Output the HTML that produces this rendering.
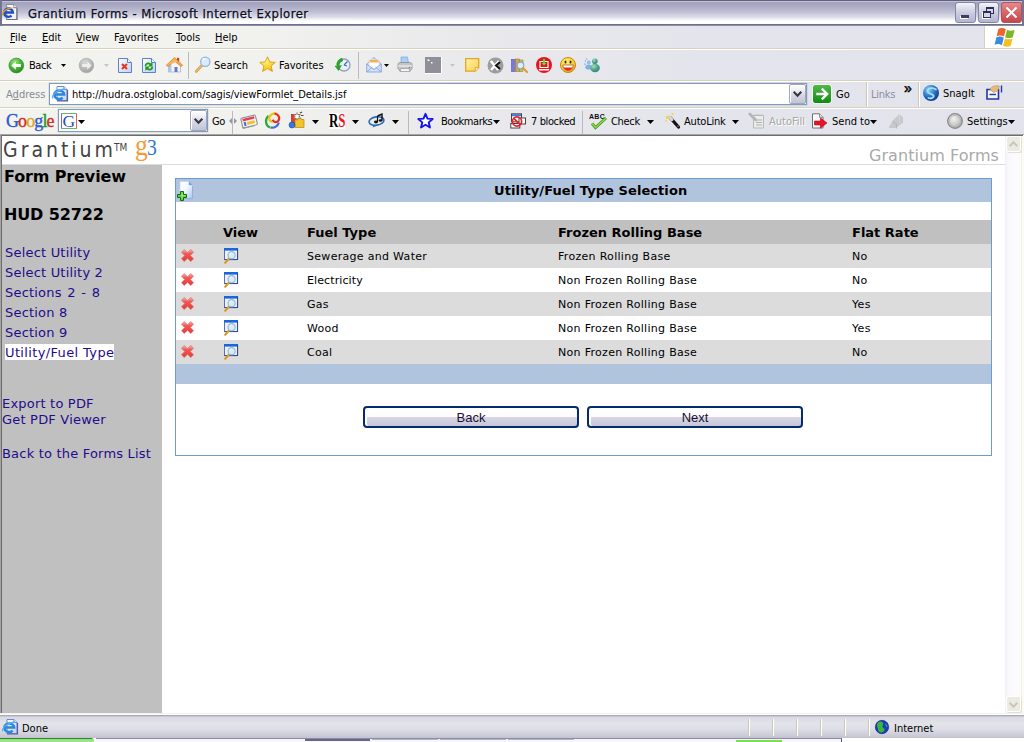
<!DOCTYPE html>
<html><head><meta charset="utf-8"><title>Grantium Forms - Microsoft Internet Explorer</title>
<style>
*{box-sizing:border-box;margin:0;padding:0}
html,body{width:1024px;height:742px;overflow:hidden;background:#fff}
body{position:relative;font-family:"DejaVu Sans Condensed","Liberation Sans",sans-serif;font-size:11px;color:#000}
.abs{position:absolute}
svg{position:absolute;overflow:visible}
.t{position:absolute;white-space:nowrap;line-height:14px;height:14px}
.d{color:#8e8ea4}
#title{left:0;top:0;width:1024px;height:26px;background:linear-gradient(#5f5f7d 0,#5f5f7d 1px,#c4c4d8 1px,#c4c4d8 2px,#a2a2be 2px,#a9a9c3 6px,#c0c0d4 12px,#dcdce8 17px,#f6f6fa 20px,#fff 21.500px,#fff 24px,#6f6f8c 24px,#6f6f8c 25px,#8d8da6 25px,#8d8da6 26px)}
#ttext{left:28px;top:6px;-webkit-text-stroke:.25px #0c0c1e;font:13px/16px "DejaVu Sans Condensed","Liberation Sans",sans-serif;height:16px;letter-spacing:.43px;color:#0c0c1e;text-shadow:1px 1px 0 rgba(255,255,255,.55)}
.cb{position:absolute;top:2px;width:21px;height:21px;border:1px solid #8486a6;border-radius:3px;background:linear-gradient(#f4f4fa,#c9cade 55%,#b4b6d0)}
#rebar{left:0;top:26px;width:1024px;height:108px;background:linear-gradient(90deg,#f3f3ef 0,#f1f1ee 260px,#e9e9ec 480px,#e4e5ec 700px,#e2e3eb 1024px)}
.hsep{position:absolute;left:0;width:1024px;height:2px;background:linear-gradient(#d8d2bd 0,#d8d2bd 1px,#fff 1px,#fff 2px)}
.vsep{position:absolute;width:2px;background:linear-gradient(90deg,#cdc8b4 0,#cdc8b4 1px,#fff 1px,#fff 2px)}
.ts{position:absolute;width:1px;background:#b9b9c4}
.combo{position:absolute;background:#fff;border:1px solid #7f9db9;box-shadow:0 0 0 .5px rgba(127,157,185,.35)}
.dd{position:absolute;width:17px;border:1px solid #a3a5bd;border-radius:2px;background:linear-gradient(#fff 0,#f0f0f6 25%,#d4d5e3 60%,#c2c3d7 100%);box-shadow:1px 1px 0 #fff inset}
.ar{position:absolute;width:0;height:0;border-left:3.5px solid transparent;border-right:3.5px solid transparent;border-top:4px solid #000}
.ar5{position:absolute;width:0;height:0;border-left:3px solid transparent;border-right:3px solid transparent;border-top:3px solid #000}
#page{left:0;top:134px;width:1024px;height:582px;background:#fff}
#side{left:2px;top:165px;width:160px;height:548px;background:#c0c0c0}
#status{left:0;top:713px;width:1024px;height:25px;background:linear-gradient(#f4f2e6 0,#f4f2e6 1px,#fff 1px,#fff 2px,#9a9aac 2px,#b8b8c6 3px,#d9d9e2 4px,#e2e2e9 10px,#e0e0e8 15px,#d0d0dc 21px,#c2c2d0 25px)}
#task{left:0;top:738px;width:1024px;height:4px;background:#fff}
.v{font-family:"DejaVu Sans","Liberation Sans",sans-serif}
/* page content */
#logo{left:3px;top:136px;font:21px/28px "DejaVu Sans Condensed","Liberation Sans",sans-serif;color:#444;letter-spacing:3px;height:28px}
#gf{left:869px;top:146px;font:16px/20px "DejaVu Sans","Liberation Sans",sans-serif;color:#a9a9a9;height:20px;letter-spacing:.06px}
#hline{left:2px;top:164px;width:1003px;height:1px;background:#dcdcdf}
.h{font:bold 16px/20px "DejaVu Sans","Liberation Sans",sans-serif;height:20px;left:4px;color:#000;letter-spacing:-.13px}
.sl{font:13px/16px "DejaVu Sans","Liberation Sans",sans-serif;height:16px;color:#1f0c8c;letter-spacing:.2px}
#panel{left:175px;top:178px;width:817px;height:278px;border:1px solid #6f9ad0;background:#fff}
#ph{left:176px;top:179px;width:815px;height:23px;background:#b0c4de}
#pt{left:494px;top:183px;font:bold 13px/16px "DejaVu Sans","Liberation Sans",sans-serif;height:16px;letter-spacing:.07px}
#th{left:176px;top:220px;width:815px;height:24px;background:#c0c0c0}
.r{position:absolute;left:176px;width:815px;height:24px}
.g{background:#dcdcdc}
.thc{top:225px;font:bold 13px/16px "DejaVu Sans","Liberation Sans",sans-serif;height:16px}
.c{font:11px/14px "DejaVu Sans","Liberation Sans",sans-serif;height:14px;letter-spacing:.3px;color:#000}
#pf{left:176px;top:364px;width:815px;height:20px;background:#b0c4de}
.btn{position:absolute;top:406px;width:216px;height:22px;border:2px solid #042c6c;border-radius:4px;background:linear-gradient(#fff 0,#fcfcfd 50%,#d8d8e8 50%,#c6c6d9 100%);box-shadow:inset 2px 0 0 #fff;font:13px/20px "Liberation Sans",sans-serif;text-align:center;color:#1a1030}
</style></head><body>
<svg width="0" height="0" style="left:0;top:0"><defs>
<radialGradient id="gG" cx=".4" cy=".3" r=".8"><stop offset="0" stop-color="#9be67a"/><stop offset=".5" stop-color="#46b633"/><stop offset="1" stop-color="#1f7d1c"/></radialGradient>
<radialGradient id="gY" cx=".4" cy=".3" r=".8"><stop offset="0" stop-color="#d8d8d8"/><stop offset=".6" stop-color="#b4b4b4"/><stop offset="1" stop-color="#979797"/></radialGradient>
<linearGradient id="gP" x1="0" y1="0" x2="1" y2="1"><stop offset="0" stop-color="#fff"/><stop offset="1" stop-color="#bcd0f4"/></linearGradient>
<radialGradient id="gB" cx=".35" cy=".3" r=".8"><stop offset="0" stop-color="#8fd0f4"/><stop offset=".5" stop-color="#2a78c8"/><stop offset="1" stop-color="#0a2f86"/></radialGradient>
<radialGradient id="gS" cx=".4" cy=".35" r=".7"><stop offset="0" stop-color="#f2f2f2"/><stop offset=".7" stop-color="#c4c4c4"/><stop offset="1" stop-color="#9a9a9a"/></radialGradient>
<radialGradient id="gF" cx=".4" cy=".3" r=".8"><stop offset="0" stop-color="#fff27a"/><stop offset=".7" stop-color="#f7c81e"/><stop offset="1" stop-color="#d58a0a"/></radialGradient>
<linearGradient id="gN" x1="0" y1="0" x2="1" y2="1"><stop offset="0" stop-color="#fff3a8"/><stop offset="1" stop-color="#f7cf52"/></linearGradient>
<linearGradient id="gGo" x1="0" y1="0" x2="0" y2="1"><stop offset="0" stop-color="#52b848"/><stop offset="1" stop-color="#118a14"/></linearGradient>
<radialGradient id="gM" cx=".35" cy=".3" r=".9"><stop offset="0" stop-color="#a8e0b0"/><stop offset=".5" stop-color="#4a9e88"/><stop offset="1" stop-color="#2a6aa8"/></radialGradient>
<linearGradient id="gD" x1="0" y1="0" x2="1" y2="1"><stop offset="0" stop-color="#fff"/><stop offset=".45" stop-color="#f4f8ff"/><stop offset="1" stop-color="#a4c6f8"/></linearGradient>
<linearGradient id="gX" x1="0" y1="0" x2="0" y2="1"><stop offset="0" stop-color="#f8b4b0"/><stop offset=".35" stop-color="#ee5a56"/><stop offset="1" stop-color="#e23a36"/></linearGradient>
</defs></svg>
<div id="title" class="abs"></div>
<div class="abs" style="left:0;top:0;width:2px;height:26px;background:#74748f"></div>
<div class="abs" style="left:1022px;top:0;width:2px;height:26px;background:#74748f"></div>
<div id="ttext" class="t">Grantium Forms - Microsoft Internet Explorer</div>
<div class="cb" style="left:955px"><div class="abs" style="left:5px;top:12px;width:8px;height:3px;background:#3c3e66;box-shadow:-1px 1px 0 #fff"></div></div>
<div class="cb" style="left:978px"><div class="abs" style="left:7px;top:4px;width:8px;height:7px;border:1px solid #2c2e56;border-top-width:2px"></div><div class="abs" style="left:4px;top:8px;width:8px;height:7px;border:1px solid #2c2e56;border-top-width:2px;background:#d4d5e6;box-shadow:-1px 1px 0 #fff"></div></div>
<div class="cb" style="left:1001px;border-color:#b4525e;background:linear-gradient(#e48a8c,#d46668 50%,#c4484e)"><svg style="left:3px;top:3px" width="13" height="13" viewBox="0 0 13 13"><path d="M1.500 1.500l10 10M11.500 1.500l-10 10" stroke="#fff" stroke-width="2"/></svg></div>
<div id="rebar" class="abs"></div>
<div class="abs" style="left:985px;top:26px;width:39px;height:22px;background:#fff"></div>
<div class="abs" style="left:984px;top:26px;width:1px;height:22px;background:#d8d2bd"></div>
<div class="hsep" style="top:48px"></div>
<div class="hsep" style="top:80px"></div>
<div class="hsep" style="top:107px"></div>
<div class="vsep" style="left:866px;top:82px;height:25px"></div>
<div class="vsep" style="left:918px;top:82px;height:25px"></div>
<div class="t" style="left:10px;top:31px"><u>F</u>ile</div>
<div class="t" style="left:42px;top:31px"><u>E</u>dit</div>
<div class="t" style="left:76px;top:31px"><u>V</u>iew</div>
<div class="t" style="left:114px;top:31px">F<u>a</u>vorites</div>
<div class="t" style="left:176px;top:31px"><u>T</u>ools</div>
<div class="t" style="left:215px;top:31px"><u>H</u>elp</div>
<div class="t" style="left:29px;top:59px;letter-spacing:-.45px">Back</div>
<svg style="left:61px;top:64px" width="5" height="3" viewBox="0 0 5 3"><path d="M0 0h5l-2.500 3z" fill="#000"/></svg>
<svg style="left:104px;top:64px" width="5" height="3" viewBox="0 0 5 3"><path d="M0 0h5l-2.500 3z" fill="#c4c4cc"/></svg>
<div class="ts" style="left:188px;top:52px;height:27px"></div>
<div class="t" style="left:214px;top:59px">Search</div>
<div class="t" style="left:279px;top:59px">Favorites</div>
<div class="ts" style="left:358px;top:52px;height:27px"></div>
<svg style="left:384px;top:64px" width="5" height="3" viewBox="0 0 5 3"><path d="M0 0h5l-2.500 3z" fill="#000"/></svg>
<svg style="left:450px;top:64px" width="5" height="3" viewBox="0 0 5 3"><path d="M0 0h5l-2.500 3z" fill="#c4c4cc"/></svg>
<div class="t d" style="left:6px;top:88px;color:#8a8a96">A<u>d</u>dress</div>
<div class="combo" style="left:49px;top:83px;width:758px;height:22px"></div>
<div class="t" style="left:72px;top:88px;letter-spacing:-.07px">http://hudra.ostglobal.com/sagis/viewFormlet_Details.jsf</div>
<div class="dd" style="left:789px;top:84px;height:20px"><svg style="left:3px;top:6px" width="9" height="6" viewBox="0 0 9 6"><path d="M.7 .7l3.800 4 3.800-4" fill="none" stroke="#36363e" stroke-width="2.100"/></svg></div>
<div class="t" style="left:836px;top:88px">Go</div>
<div class="t" style="left:871px;top:88px;color:#8c8ca6;letter-spacing:-.25px">Links</div>
<div class="t" style="left:904px;top:79px;font:14px/18px 'Liberation Sans',sans-serif;height:18px;-webkit-text-stroke:.5px;letter-spacing:-.3px">»</div>
<div class="t" style="left:943px;top:87px">SnagIt</div>
<div class="t" style="left:6px;top:109px;height:24px;font:18px/24px 'Liberation Serif',serif;letter-spacing:-.9px;-webkit-text-stroke:.35px"><span style="color:#2a5ad8">G</span><span style="color:#d82a20">o</span><span style="color:#d8a818">o</span><span style="color:#2a5ad8">g</span><span style="color:#1a9a2a">l</span><span style="color:#d82a20">e</span></div>
<div class="combo" style="left:58px;top:109px;width:150px;height:23px"></div>
<svg style="left:78px;top:120px" width="7" height="4" viewBox="0 0 7 4"><path d="M0 0h7l-3.500 4z" fill="#000"/></svg>
<div class="dd" style="left:190px;top:110px;height:21px"><svg style="left:3px;top:7px" width="9" height="6" viewBox="0 0 9 6"><path d="M.7 .7l3.800 4 3.800-4" fill="none" stroke="#36363e" stroke-width="2.100"/></svg></div>
<div class="t" style="left:212px;top:115px;letter-spacing:-.5px">Go</div>
<div class="ts" style="left:232px;top:111px;height:23px"></div>
<div class="abs" style="left:229px;top:118px;width:0;height:0;border-top:3.500px solid transparent;border-bottom:3.500px solid transparent;border-right:3.500px solid #96969e"></div>
<div class="abs" style="left:234px;top:118px;width:0;height:0;border-top:3.500px solid transparent;border-bottom:3.500px solid transparent;border-left:3.500px solid #96969e"></div>
<svg style="left:312px;top:120px" width="7" height="4" viewBox="0 0 7 4"><path d="M0 0h7l-3.500 4z" fill="#000"/></svg>
<div class="abs" style="left:329px;top:113px;width:16px;height:16px;background:#fff"></div>
<div class="t" style="left:329px;top:111px;height:20px;font:bold 19px/20px 'Liberation Serif',serif;transform:scaleX(.68);transform-origin:0 0">R<span style="color:#f0141e">S</span></div>
<svg style="left:352px;top:120px" width="7" height="4" viewBox="0 0 7 4"><path d="M0 0h7l-3.500 4z" fill="#000"/></svg>
<svg style="left:392px;top:120px" width="7" height="4" viewBox="0 0 7 4"><path d="M0 0h7l-3.500 4z" fill="#000"/></svg>
<div class="ts" style="left:408px;top:111px;height:23px"></div>
<div class="t" style="left:441px;top:115px;letter-spacing:-.45px">Bookmarks</div>
<svg style="left:493px;top:120px" width="7" height="4" viewBox="0 0 7 4"><path d="M0 0h7l-3.500 4z" fill="#000"/></svg>
<div class="t" style="left:531px;top:115px;letter-spacing:-.38px">7 blocked</div>
<div class="ts" style="left:582px;top:111px;height:23px"></div>
<div class="t" style="left:611px;top:115px;letter-spacing:-.32px">Check</div>
<svg style="left:647px;top:120px" width="7" height="4" viewBox="0 0 7 4"><path d="M0 0h7l-3.500 4z" fill="#000"/></svg>
<div class="t" style="left:684px;top:115px;letter-spacing:-.2px">AutoLink</div>
<svg style="left:732px;top:120px" width="7" height="4" viewBox="0 0 7 4"><path d="M0 0h7l-3.500 4z" fill="#000"/></svg>
<div class="t" style="left:769px;top:115px;color:#a8a89c;text-shadow:1px 1px 0 #fff">AutoFill</div>
<div class="t" style="left:832px;top:115px">Send to</div>
<svg style="left:870px;top:120px" width="7" height="4" viewBox="0 0 7 4"><path d="M0 0h7l-3.500 4z" fill="#000"/></svg>
<div class="t" style="left:967px;top:115px">Settings</div>
<svg style="left:1008px;top:120px" width="7" height="4" viewBox="0 0 7 4"><path d="M0 0h7l-3.500 4z" fill="#000"/></svg>

<div id="page" class="abs"></div>
<div class="abs" style="left:0;top:134px;width:1024px;height:1px;background:#a5a5a5"></div>
<div class="abs" style="left:1px;top:135px;width:1022px;height:1px;background:#6d6d6d"></div>
<div class="abs" style="left:0;top:134px;width:1px;height:580px;background:#a5a5a5"></div>
<div class="abs" style="left:1px;top:135px;width:1px;height:578px;background:#6d6d6d"></div>
<div id="side" class="abs"></div>
<div class="abs" style="left:1005px;top:136px;width:19px;height:577px;background:linear-gradient(90deg,#eeeef4 0,#f7f7fb 2px,#fbfbfe 8px,#fcfcff 16px,#f3f1e5 16px,#f3f1e5 17px,#fbfaf4 17px,#fbfaf4 19px)"></div>
<div class="abs" style="left:1006px;top:136px;width:15px;height:16px;border:1px solid #fff;border-radius:2px;background:#ecebe1;box-shadow:1px 1px 0 #e2e0d0"><svg style="left:2px;top:4px" width="9" height="6" viewBox="0 0 9 6"><path d="M.6 5.200l3.900-4 3.900 4" fill="none" stroke="#c9c7bb" stroke-width="2"/></svg></div>
<div class="abs" style="left:1006px;top:696px;width:15px;height:16px;border:1px solid #fff;border-radius:2px;background:#ecebe1;box-shadow:1px 1px 0 #e2e0d0"><svg style="left:2px;top:5px" width="9" height="6" viewBox="0 0 9 6"><path d="M.6 .800l3.900 4 3.900-4" fill="none" stroke="#c9c7bb" stroke-width="2"/></svg></div>
<!-- page content -->
<div id="logo" class="t">Grantium<span style="font-size:10px;letter-spacing:0;position:relative;top:-6.500px;margin-left:-2px">TM</span></div>
<div class="t" style="left:134.500px;top:129px;height:32px;font:29px/32px 'Liberation Serif',serif;color:#f59a38;transform:scaleX(.88);transform-origin:0 0">g</div>
<div class="t" style="left:146.500px;top:131px;height:32px;font:24px/32px 'Liberation Serif',serif;color:#2f76c8;transform:scaleX(.82);transform-origin:0 0">3</div>
<div id="gf" class="t">Grantium Forms</div>
<div id="hline" class="abs"></div>
<div class="t h" style="top:167px">Form Preview</div>
<div class="t h" style="top:205px">HUD 52722</div>
<div class="t sl" style="left:5px;top:245px">Select Utility</div>
<div class="t sl" style="left:5px;top:265px">Select Utility 2</div>
<div class="t sl" style="left:5px;top:285px;word-spacing:1.25px">Sections 2 - 8</div>
<div class="t sl" style="left:5px;top:305px">Section 8</div>
<div class="t sl" style="left:5px;top:325px">Section 9</div>
<div class="t sl" style="left:5px;top:344px;background:#fff;width:109px;line-height:18px;letter-spacing:.36px">Utility/Fuel Type</div>
<div class="t sl" style="left:2px;top:396px">Export to PDF</div>
<div class="t sl" style="left:2px;top:412px">Get PDF Viewer</div>
<div class="t sl" style="left:2px;top:446px">Back to the Forms List</div>
<div id="panel" class="abs"></div>
<div id="ph" class="abs"></div>
<div id="pt" class="t">Utility/Fuel Type Selection</div>
<div id="th" class="abs"></div>
<div class="t thc" style="left:223px">View</div>
<div class="t thc" style="left:307px">Fuel Type</div>
<div class="t thc" style="left:558px">Frozen Rolling Base</div>
<div class="t thc" style="left:852px">Flat Rate</div>
<div class="r g" style="top:244px"></div>
<div class="r g" style="top:292px"></div>
<div class="r g" style="top:340px"></div>
<div class="t c" style="left:307px;top:250px">Sewerage and Water</div>
<div class="t c" style="left:558px;top:250px">Frozen Rolling Base</div>
<div class="t c" style="left:852px;top:250px">No</div>
<div class="t c" style="left:307px;top:274px;letter-spacing:.1px">Electricity</div>
<div class="t c" style="left:558px;top:274px">Non Frozen Rolling Base</div>
<div class="t c" style="left:852px;top:274px">No</div>
<div class="t c" style="left:307px;top:298px">Gas</div>
<div class="t c" style="left:558px;top:298px">Non Frozen Rolling Base</div>
<div class="t c" style="left:852px;top:298px">Yes</div>
<div class="t c" style="left:307px;top:322px">Wood</div>
<div class="t c" style="left:558px;top:322px">Non Frozen Rolling Base</div>
<div class="t c" style="left:852px;top:322px">Yes</div>
<div class="t c" style="left:307px;top:346px">Coal</div>
<div class="t c" style="left:558px;top:346px">Non Frozen Rolling Base</div>
<div class="t c" style="left:852px;top:346px">No</div>
<div id="pf" class="abs"></div>
<div class="btn" style="left:363px">Back</div>
<div class="btn" style="left:587px">Next</div>

<div id="status" class="abs"></div>
<div class="t" style="left:22px;top:722px">Done</div>
<div class="vsep" style="left:748px;top:719px;height:17px"></div><div class="vsep" style="left:772px;top:719px;height:17px"></div><div class="vsep" style="left:796px;top:719px;height:17px"></div><div class="vsep" style="left:820px;top:719px;height:17px"></div><div class="vsep" style="left:844px;top:719px;height:17px"></div><div class="vsep" style="left:868px;top:719px;height:17px"></div>
<div class="t" style="left:894px;top:722px">Internet</div>
<div id="task" class="abs"></div>
<div class="abs" style="left:0;top:738px;width:94px;height:4px;background:linear-gradient(#2a8a2a 0,#2a8a2a 1px,#8edc7c 1px,#a4e694 4px);border-radius:0 3px 0 0"></div>
<div class="abs" style="left:96px;top:738px;width:746px;height:4px;border-top:1px solid #8c8ca8;border-right:1px solid #55557a;background:#f6f6fa"></div>
<div class="abs" style="left:305px;top:739px;width:65px;height:2px;background:#66668a"></div>
<div class="abs" style="left:372px;top:739px;width:66px;height:1px;background:#b4b4c8"></div>
<div class="abs" style="left:440px;top:739px;width:66px;height:1px;background:#b4b4c8"></div>
<div class="abs" style="left:508px;top:739px;width:66px;height:1px;background:#b4b4c8"></div>
<div class="abs" style="left:736px;top:740px;width:46px;height:2px;background:#7ae04a"></div>
<svg style="left:2px;top:4px" width="16.5" height="16.5" viewBox="0 0 16 16"><path d="M4.500 .500h7l3 3v11.500h-10z" fill="#f4f4ec" stroke="#8c8c9c"/><path d="M11.500 .500v3h3" fill="#fff" stroke="#8c8c9c"/><path d="M14.500 4v11h-10" fill="none" stroke="#6a6a8a" stroke-width="1"/><path d="M9.300 11.300a4.300 4 0 1 1 1.300-3.100H2.600" fill="none" stroke="#1c4fc8" stroke-width="2.300"/><path d="M.600 11c-.5-3.500 4-7.500 9.500-7" fill="none" stroke="#e8a020" stroke-width="1.300"/></svg>
<svg style="left:8px;top:57px" width="17" height="17" viewBox="0 0 17 17"><circle cx="8.3" cy="8.5" r="7.4" fill="url(#gG)" stroke="#2f8a2a" stroke-width=".6"/><path d="M3.4 8.5l4.4-4.3v2.7h5v3.2h-5v2.7z" fill="#fff"/></svg>
<svg style="left:78px;top:57px" width="17" height="17" viewBox="0 0 17 17"><circle cx="8.4" cy="8.5" r="7.3" fill="url(#gY)" stroke="#a8a8a8" stroke-width=".6"/><path d="M13.6 8.5l-4.4-4.3v2.7h-5v3.2h5v2.7z" fill="#eee"/></svg>
<svg style="left:118px;top:58px" width="14" height="15" viewBox="0 0 14 15"><path d="M.5 .5h9l4 4v10h-13z" fill="url(#gP)" stroke="#5f7fce"/><path d="M9.5 .5v4h4" fill="#eef4ff" stroke="#5f7fce"/><path d="M4 6l5 5M9 6l-5 5" stroke="#e8321e" stroke-width="2"/></svg>
<svg style="left:142px;top:58px" width="14" height="15" viewBox="0 0 14 15"><path d="M.5 .5h9l4 4v10h-13z" fill="url(#gP)" stroke="#5f7fce"/><path d="M9.5 .5v4h4" fill="#eef4ff" stroke="#5f7fce"/><path d="M2.6 8.2c0-3.6 4-5 6.300-2.700l1.600-1.500v4.400h-4.400l1.500-1.500c-1.200-1.200-3.200-.6-3.200 1.300z" fill="#1e9a1e"/><path d="M11.200 8.800c0 3.600-4 5-6.300 2.700l-1.600 1.500v-4.400h4.400l-1.500 1.500c1.200 1.200 3.200.6 3.200-1.300z" fill="#1e9a1e"/></svg>
<svg style="left:166px;top:57px" width="17" height="16" viewBox="0 0 17 16"><path d="M11 .8h2.200v4h-2.200z" fill="#d04028"/><path d="M2.500 8l6-5.500 6 5.500v7h-12z" fill="#f4f6fc" stroke="#9aaad0" stroke-width=".7"/><path d="M2.500 8l3-2.700v9.700h-3z" fill="#a8c8f0"/><path d="M8.500 10h3v5h-3z" fill="#6878b8"/><path d="M.3 8.300l8.200-7.800 8.200 7.800-1.800 1.200-6.400-5.700-6.400 5.700z" fill="#f4a848" stroke="#d88020" stroke-width=".7"/><path d="M1 8l7.500-6.500 3 2.800-4.500 2.200z" fill="#f8b860" opacity=".9"/></svg>
<svg style="left:195px;top:56px" width="16" height="17" viewBox="0 0 16 17"><path d="M1.200 15.500l6-6.500" stroke="#d8a050" stroke-width="2.600" stroke-linecap="round"/><path d="M1.200 15.500l6-6.500" stroke="#f0c888" stroke-width="1" stroke-linecap="round"/><circle cx="10.300" cy="5.700" r="4.600" fill="#d8ecfc" stroke="#9ab4d8" stroke-width="1.300"/><path d="M7.500 4.500a3.200 3.200 0 0 1 3-2" stroke="#fff" stroke-width="1.200" fill="none"/></svg>
<svg style="left:259px;top:56px" width="17" height="16" viewBox="0 0 17 16"><path d="M8.500 .8l2.300 5.100 5.500.5-4.200 3.600 1.300 5.400-4.900-2.900-4.900 2.900 1.300-5.400-4.200-3.600 5.500-.5z" fill="url(#gF)" stroke="#d8a018" stroke-width=".9" stroke-linejoin="round"/></svg>
<svg style="left:335px;top:57px" width="16" height="16" viewBox="0 0 16 16"><circle cx="9" cy="8" r="6" fill="#e8f0fa" stroke="#98a0b8" stroke-width="1.400"/><path d="M9 8l3.500-3.500M9 8l3 1" stroke="#4868a8" stroke-width="1.100"/><path d="M7 1.300a6.500 6.500 0 0 0-5 8.200l-2-.5 3.500 4.500 2.800-5-2 .5c-.5-2.500 1-4.500 3.300-5z" fill="#2aa82a" stroke="#168016" stroke-width=".5"/></svg>
<svg style="left:366px;top:56px" width="16" height="17" viewBox="0 0 16 17"><path d="M.700 8l7.300-6.500 7.300 6.500v8h-14.600z" fill="#cfe2fa" stroke="#8aa4d8" stroke-width=".9"/><path d="M3 3.500h10v7l-5 2.500-5-2.500z" fill="#fff" stroke="#c8ccd8" stroke-width=".5"/><path d="M3.500 4h9v2.500h-9z" fill="#f4b050"/><path d="M.700 8l7.300 5.500 7.300-5.500M.7 16l5.800-5M15.300 16l-5.800-5" fill="none" stroke="#8aa4d8" stroke-width=".9"/></svg>
<svg style="left:397px;top:56px" width="16" height="17" viewBox="0 0 16 17"><path d="M4 1h6.500l1 6h-7.500z" fill="#a8d0f8" stroke="#78a8e0" stroke-width=".7"/><path d="M1 8.500c0-1.500 1-2 2.500-2h9c1.500 0 2.500.5 2.500 2v4l-2 2.500h-10l-2-2.500z" fill="#c4c4c8" stroke="#8c8c94" stroke-width=".8"/><path d="M1 10h14" stroke="#f0f0f0" stroke-width="1.200"/><path d="M4 12.500h8l1 3h-10z" fill="#f4f4f4" stroke="#8c8c94" stroke-width=".6"/><circle cx="12.500" cy="11.500" r=".8" fill="#4a4"/></svg>
<svg style="left:425px;top:57px" width="17" height="17" viewBox="0 0 17 17"><rect x="0" y="0" width="16" height="16" fill="#8f8f98"/><path d="M16.500 0v16.500h-16.500" fill="none" stroke="#fff"/><path d="M2.500 2.500h2v1.500h-2zM6 5h1.500v1.500h-1.500z" fill="#fff"/></svg>
<svg style="left:465px;top:58px" width="15" height="14" viewBox="0 0 15 14"><path d="M.700 .700h13v9l-3.500 3.500h-9.500z" fill="url(#gN)" stroke="#e0a820" stroke-width="1.300"/><path d="M13.700 9.700h-3.500v3.500" fill="#fff8d0" stroke="#e0a820" stroke-width="1"/></svg>
<svg style="left:487px;top:57px" width="17" height="17" viewBox="0 0 17 17"><circle cx="8.500" cy="8.500" r="8" fill="#9c9c9c"/><path d="M3.800 4l7.500 9M12 4l-8 9" stroke="#fff" stroke-width="2.600"/><path d="M13 5l-4 3.500 4 3.500" stroke="#111" stroke-width="2" fill="none"/></svg>
<svg style="left:511px;top:58px" width="17" height="16" viewBox="0 0 17 16"><rect x=".5" y="1.500" width="4" height="12" fill="#7a7ad8" stroke="#5050b0" stroke-width=".6"/><rect x="4.500" y="1" width="4" height="12.500" fill="#c8a850" stroke="#a08030" stroke-width=".6"/><rect x="8.500" y="2" width="3.500" height="11.500" fill="#d8b860" stroke="#a08030" stroke-width=".6"/><circle cx="9.500" cy="7.500" r="3.300" fill="#d8f0fc" stroke="#88a8c8" stroke-width="1.200"/><path d="M12 10l4 4" stroke="#d8a030" stroke-width="2.200" stroke-linecap="round"/></svg>
<svg style="left:536px;top:57px" width="17" height="17" viewBox="0 0 17 17"><circle cx="8" cy="8" r="8" fill="#e8141c"/><path d="M4 4.500h8v6h-8z" fill="none" stroke="#fff" stroke-width="1.200"/><path d="M2.500 12h11l-1 1.500h-9z" fill="#fff"/><path d="M7 2h2v4h1.500l-2.500 2.500-2.500-2.500h1.500z" fill="#5ae02a"/></svg>
<svg style="left:560px;top:57px" width="17" height="17" viewBox="0 0 17 17"><circle cx="8" cy="8" r="7.500" fill="url(#gF)" stroke="#c88810" stroke-width="1"/><ellipse cx="5.500" cy="5" rx="1" ry="1.600" fill="#3a2a10"/><ellipse cx="10.500" cy="5" rx="1" ry="1.600" fill="#3a2a10"/><path d="M2.800 8h10.400c0 3.500-2.400 5.500-5.200 5.500s-5.200-2-5.200-5.500z" fill="#fff" stroke="#8a2a10" stroke-width=".6"/><path d="M3.500 10.500h9c-.8 2-2.500 3-4.500 3s-3.700-1-4.500-3z" fill="#e82a20"/></svg>
<svg style="left:584px;top:57px" width="17" height="16" viewBox="0 0 17 16"><circle cx="4.800" cy="5.500" r="2" fill="#8ac0ec"/><ellipse cx="4.500" cy="10" rx="3.200" ry="2.600" fill="#7ab4e8"/><path d="M1 3.500l1 .8M.3 7l1.200 .2M2.500 1.500l.6 1" stroke="#4a8ae0" stroke-width="1"/><circle cx="10.800" cy="4.300" r="2.800" fill="url(#gM)"/><ellipse cx="11" cy="11" rx="4.800" ry="4.200" fill="url(#gM)"/></svg>
<svg style="left:52px;top:86px" width="16" height="16" viewBox="0 0 16 16"><path d="M5 .500h7l3 3v11h-10z" fill="url(#gP)" stroke="#7088c8"/><path d="M12 .500v3h3" fill="#fff" stroke="#7088c8"/><path d="M15.500 4v11h-10.500" fill="none" stroke="#5a5a9a" stroke-width="1.200"/><path d="M10.700 11.800a5 4.300 0 1 1 1.500-3.300H3" fill="none" stroke="#2a86e0" stroke-width="2.500"/><path d="M.800 12.500c-1.500-4 5-9 12.500-9.500" fill="none" stroke="#58b0f0" stroke-width="1.300"/></svg>
<svg style="left:812px;top:84px" width="20" height="20" viewBox="0 0 20 20"><rect x="1" y="1" width="18" height="18" rx="2" fill="url(#gGo)"/><rect x=".5" y=".5" width="19" height="19" rx="2.500" fill="none" stroke="#f4faf4" stroke-width="1" opacity=".8"/><path d="M4.300 10h10.700M9.800 4.600l5.400 5.400-5.400 5.400" fill="none" stroke="#fff" stroke-width="2.300"/></svg>
<svg style="left:923px;top:85px" width="16" height="16" viewBox="0 0 16 16"><circle cx="8" cy="8" r="8" fill="url(#gB)"/><path d="M13 4.500c-3-2.500-8-1.500-8.500 1.500-.5 3 5 2.500 6 4.500s-2.500 3.500-5 2.500" fill="none" stroke="#a8dcf8" stroke-width="1.800" stroke-linecap="round"/></svg>
<svg style="left:986px;top:85px" width="17" height="15" viewBox="0 0 17 15"><path d="M1 4.500h11.500v9.500h-11.500z" fill="#f4f6ff" stroke="#2038a8" stroke-width="1.600"/><path d="M3.500 9.500h6.500" stroke="#2038a8" stroke-width="1.400"/><path d="M15.500 .5v7" stroke="#2038a8" stroke-width="1.400"/><path d="M4 4.500c1-3 5-4.500 9.500-3.500l-2 5-4 1.500z" fill="#e8b878" stroke="#b88848" stroke-width=".5"/></svg>
<svg style="left:61px;top:113px" width="16" height="16" viewBox="0 0 16 16"><rect x=".5" y=".5" width="15" height="15" fill="#fff"/><path d="M.5 0v16" stroke="#6868d8"/><path d="M15.500 0v16" stroke="#e06060"/><path d="M0 .5h16M0 15.500h16" stroke="#68b868"/><text x="1.500" y="14" font-family="Liberation Serif,serif" font-size="17.500" fill="#2a50b8">G</text></svg>
<svg style="left:240px;top:113px" width="18" height="16" viewBox="0 0 18 16"><g transform="rotate(-14 9 8)"><rect x="1.500" y="3.500" width="15" height="10" rx="1.500" fill="#f4f4f4" stroke="#8a8a8a" stroke-width="1"/><rect x="3" y="4.500" width="12" height="2.500" fill="#e83a5a"/><rect x="3.500" y="8" width="2" height="4" fill="#3a6ae0"/><rect x="6.500" y="8.500" width="8" height="3" fill="#f4c030"/></g><path d="M2 12l1 3.500 12-3" fill="none" stroke="#9a9a9a" stroke-width="1"/></svg>
<svg style="left:264px;top:112px" width="17" height="17" viewBox="0 0 17 17"><path d="M6 15.500C1.500 13.500 .500 7.500 4.500 3.800" fill="none" stroke="#2aa838" stroke-width="2.200"/><path d="M8.500 9.800C4.500 9.500 4 4.500 8 2.200 9.500 1.400 11 1.200 12 1.500" fill="none" stroke="#f0c418" stroke-width="2.200"/><path d="M10.500 1.500C14.500 2 16.500 6 14.200 9 12.500 10.800 10 10.500 8.500 7.800" fill="none" stroke="#e83020" stroke-width="2.200"/><path d="M14.800 10.500C14 14 10.500 16.300 6.500 15.500" fill="none" stroke="#3a70d8" stroke-width="2.200"/></svg>
<svg style="left:288px;top:112px" width="17" height="17" viewBox="0 0 17 17"><rect x="3.500" y="2.500" width="8" height="12" fill="#e83a2a" stroke="#a01810" stroke-width=".6"/><path d="M7 7.500h3v-1.500h3v1.500h3v8h-9z" fill="#f4c428" stroke="#b88810" stroke-width=".7"/><circle cx="4" cy="13" r="3" fill="#3a78e0" stroke="#1a48a8" stroke-width=".6"/><path d="M9 .5l1 2.500 2.500-.500-1.500 2 1.500 2-2.500-.500-1 2.500-1-2.500-2.500 .500 1.500-2-1.500-2 2.500 .500z" fill="#fff" stroke="#666" stroke-width=".5"/><path d="M12 1l2-1M13 3.500l2.500 0" stroke="#444" stroke-width="1.200"/></svg>
<svg style="left:368px;top:113px" width="18" height="16" viewBox="0 0 18 16"><ellipse cx="8.500" cy="8" rx="7.500" ry="4.200" fill="none" stroke="#2a6ab8" stroke-width="1.600" transform="rotate(-8 8.500 8)"/><path d="M6 11.500l-1.500 3 4-1.500" fill="#2a6ab8"/><path d="M9.500 3l4.500-2v6.500" fill="none" stroke="#111" stroke-width="1.400"/><path d="M9.500 3v6" stroke="#111" stroke-width="1.200"/><ellipse cx="8" cy="9" rx="2" ry="1.400" fill="#111"/><ellipse cx="12.500" cy="7.500" rx="1.800" ry="1.300" fill="#111"/></svg>
<svg style="left:417px;top:112px" width="17" height="17" viewBox="0 0 17 17"><path d="M8.500 1.800l2 4.800 5.200.4-4 3.400 1.300 5.100-4.500-2.800-4.500 2.800 1.300-5.100-4-3.400 5.200-.4z" fill="#fff" stroke="#1414f0" stroke-width="1.900" stroke-linejoin="round"/></svg>
<svg style="left:510px;top:113px" width="17" height="16" viewBox="0 0 17 16"><rect x="1.500" y=".800" width="10" height="8" fill="#fff" stroke="#444" stroke-width="1"/><rect x="2" y="1.200" width="9" height="2" fill="#3a78d8"/><rect x="9" y="5" width="6.500" height="6" fill="#fff" stroke="#444" stroke-width="1"/><rect x=".800" y="10.500" width="9" height="4.500" fill="#fff" stroke="#444" stroke-width="1"/><circle cx="7" cy="8.500" r="4.600" fill="none" stroke="#e8202a" stroke-width="1.700"/><path d="M3.800 5.300l6.400 6.400" stroke="#e8202a" stroke-width="1.700"/></svg>
<svg style="left:589px;top:113px" width="19" height="16" viewBox="0 0 19 16"><text x="0" y="6" font-family="Liberation Sans,sans-serif" font-weight="bold" font-size="7" fill="#111" letter-spacing=".3">ABC</text><path d="M3 10.500l3.500 4 10.500-9.500" fill="none" stroke="#4a9a2a" stroke-width="3"/><path d="M3 10.500l3.500 4 10.500-9.500" fill="none" stroke="#8ad848" stroke-width="1.400"/></svg>
<svg style="left:664px;top:112px" width="17" height="17" viewBox="0 0 17 17"><path d="M6.500 6l8 9" stroke="#111" stroke-width="3.200" stroke-linecap="round"/><path d="M6 5.500l2 2.200" stroke="#d8d8d8" stroke-width="3" stroke-linecap="round"/><path d="M13.500 13.500l1 1.200" stroke="#888" stroke-width="1.200"/><path d="M3.500 3l.6 1.500 1.600.2-1.200 1 .4 1.600-1.400-.9-1.400.9.400-1.600-1.200-1 1.600-.2zM8.500 .5l.4 1 1 .1-.8.7.3 1-.9-.6-.9.600.3-1-.8-.7 1-.1zM2.500 8.500l.8.400-.800 .4-.4.800-.4-.8-.8-.4.800-.4.400-.8z" fill="#f4d020"/></svg>
<svg style="left:749px;top:113px" width="16" height="16" viewBox="0 0 16 16"><path d="M4.500 2.500h10v12.500h-10z" fill="#ececec" stroke="#b8b8b8" stroke-width="1"/><path d="M5 1.500l1 1.500 1-1.500 1 1.500 1-1.500 1 1.500 1-1.500 1 1.500 1-1.500" fill="none" stroke="#b8b8b8" stroke-width=".8"/><path d="M7 7h6M7 9.500h6M7 12h6" stroke="#b0b0b0" stroke-width="1.100"/><path d="M.800 1l6 6" stroke="#b4b4b4" stroke-width="2.600" stroke-linecap="round"/></svg>
<svg style="left:811px;top:113px" width="18" height="16" viewBox="0 0 18 16"><path d="M1.500 .800h7l3.500 3.500v10.700h-10.500z" fill="#fcfcfc" stroke="#707070" stroke-width="1"/><path d="M8.500 .800v3.500h3.500" fill="#e8e8e8" stroke="#707070" stroke-width=".8"/><path d="M3.500 8h6v-3l6.500 5-6.500 5v-3h-6z" fill="#f01028" stroke="#a00818" stroke-width=".6"/></svg>
<svg style="left:888px;top:113px" width="16" height="16" viewBox="0 0 16 16"><path d="M1 14l3.500-6 7-7 3.500 3.500v5l-7 5.500h-7z" fill="#c8c8cc"/><path d="M4.500 8l4 3.500v4" fill="none" stroke="#b0b0b4" stroke-width=".8"/><path d="M11.500 1v9" stroke="#d8d8dc" stroke-width=".8"/></svg>
<svg style="left:947px;top:113px" width="16" height="16" viewBox="0 0 16 16"><circle cx="8" cy="8" r="7.300" fill="url(#gS)" stroke="#8a8a8a" stroke-width="1.300"/><circle cx="8" cy="8" r="5.600" fill="none" stroke="#b4b4b4" stroke-width=".8"/></svg>
<svg style="left:995px;top:27px" width="21" height="19" viewBox="0 0 16.500 15.500"><path d="M2.500 1.500c2-1 4-1 6 .300l-1.500 6c-2-1.200-4-1.200-6-.300z" fill="#f0642a"/><path d="M9.500 2.300c2 1 4 1 6.200 0l-1.500 6c-2.200 1-4.200 1-6.200 0z" fill="#7ab82a"/><path d="M.800 8.500c2-1 4-1 6 .300l-1.500 6c-2-1.200-4-1.200-6-.300z" fill="#3a8ae0"/><path d="M7.800 9.300c2 1 4 1 6.200 0l-1.500 6c-2.200 1-4.200 1-6.200 0z" fill="#f4c020"/></svg>
<svg style="left:2px;top:719px" width="16" height="16" viewBox="0 0 16 16"><path d="M5 .500h7l3 3v11h-10z" fill="url(#gP)" stroke="#7088c8"/><path d="M12 .500v3h3" fill="#fff" stroke="#7088c8"/><path d="M15.500 4v11h-10.500" fill="none" stroke="#5a5a9a" stroke-width="1.200"/><path d="M10.700 11.800a5 4.300 0 1 1 1.500-3.300H3" fill="none" stroke="#2a86e0" stroke-width="2.500"/><path d="M.800 12.500c-1.500-4 5-9 12.500-9.500" fill="none" stroke="#58b0f0" stroke-width="1.300"/></svg>
<svg style="left:875px;top:720px" width="14" height="14" viewBox="0 0 14 14"><circle cx="7" cy="7" r="6.700" fill="#1c38c8" stroke="#102070" stroke-width=".6"/><path d="M3 2.500c2-1.500 4-1 5 .5s-1 2.500-.5 4 2.500 1 2 3-3 3-5 2-1-3-2-4.500-.500-3.500 .500-5z" fill="#38b838"/><path d="M10 3.500c1.500 .500 2.500 2 2.500 3.500l-1.500-.500z" fill="#38b838"/></svg>
<svg style="left:176px;top:181px" width="18" height="21" viewBox="0 0 18 21"><path d="M4 .500h9l3.500 3.500v13.500h-12.500z" fill="url(#gD)" stroke="#ccd6f0" stroke-width=".8"/><path d="M13 .500v3.500h3.500z" fill="#5aa2f0" stroke="#8ea6dc" stroke-width=".5"/><path d="M16.600 5v12.600h-12" fill="none" stroke="#9aa8d8" stroke-width="1"/><path d="M4.500 10.500h3v3h3v3h-3v3h-3v-3h-3v-3h3z" fill="#5cd03c" stroke="#0f6a12" stroke-width="1" stroke-linejoin="round"/><path d="M5.200 14.500h4.500M6 11.500v6" stroke="#9aec6a" stroke-width="1.200"/></svg>
<svg style="left:181px;top:249px" width="13" height="13" viewBox="0 0 14 14"><path d="M.5 3.500l3-3 3.500 3.500 3.500-3.500 3 3-3.500 3.500 3.500 3.500-3 3-3.500-3.500-3.500 3.500-3-3 3.500-3.500z" fill="url(#gX)" stroke="#e86464" stroke-width=".7" stroke-linejoin="round"/></svg>
<svg style="left:224px;top:248px" width="15" height="17" viewBox="0 0 15 17"><rect x=".5" y=".5" width="13" height="11" fill="#f2f0e8" stroke="#3a68c8" stroke-width=".9"/><rect x="0" y="0" width="14" height="2.600" fill="#1a66e0"/><path d="M13.600 1v10.600h-13" fill="none" stroke="#28489c" stroke-width="1"/><path d="M1.200 14.800l4-4.500" stroke="#e09828" stroke-width="2.200" stroke-linecap="round"/><circle cx="7.600" cy="7.200" r="3.600" fill="#d4ecfc" stroke="#98b4d4" stroke-width="1.100"/><path d="M5.700 6.400a2.200 2.200 0 0 1 2-1.500" stroke="#fff" stroke-width="1" fill="none"/></svg>
<svg style="left:181px;top:273px" width="13" height="13" viewBox="0 0 14 14"><path d="M.5 3.500l3-3 3.500 3.500 3.500-3.500 3 3-3.500 3.500 3.500 3.500-3 3-3.500-3.500-3.500 3.500-3-3 3.500-3.500z" fill="url(#gX)" stroke="#e86464" stroke-width=".7" stroke-linejoin="round"/></svg>
<svg style="left:224px;top:272px" width="15" height="17" viewBox="0 0 15 17"><rect x=".5" y=".5" width="13" height="11" fill="#f2f0e8" stroke="#3a68c8" stroke-width=".9"/><rect x="0" y="0" width="14" height="2.600" fill="#1a66e0"/><path d="M13.600 1v10.600h-13" fill="none" stroke="#28489c" stroke-width="1"/><path d="M1.200 14.800l4-4.500" stroke="#e09828" stroke-width="2.200" stroke-linecap="round"/><circle cx="7.600" cy="7.200" r="3.600" fill="#d4ecfc" stroke="#98b4d4" stroke-width="1.100"/><path d="M5.700 6.400a2.200 2.200 0 0 1 2-1.500" stroke="#fff" stroke-width="1" fill="none"/></svg>
<svg style="left:181px;top:297px" width="13" height="13" viewBox="0 0 14 14"><path d="M.5 3.500l3-3 3.500 3.500 3.500-3.500 3 3-3.500 3.500 3.500 3.500-3 3-3.500-3.500-3.500 3.500-3-3 3.500-3.500z" fill="url(#gX)" stroke="#e86464" stroke-width=".7" stroke-linejoin="round"/></svg>
<svg style="left:224px;top:296px" width="15" height="17" viewBox="0 0 15 17"><rect x=".5" y=".5" width="13" height="11" fill="#f2f0e8" stroke="#3a68c8" stroke-width=".9"/><rect x="0" y="0" width="14" height="2.600" fill="#1a66e0"/><path d="M13.600 1v10.600h-13" fill="none" stroke="#28489c" stroke-width="1"/><path d="M1.200 14.800l4-4.500" stroke="#e09828" stroke-width="2.200" stroke-linecap="round"/><circle cx="7.600" cy="7.200" r="3.600" fill="#d4ecfc" stroke="#98b4d4" stroke-width="1.100"/><path d="M5.700 6.400a2.200 2.200 0 0 1 2-1.500" stroke="#fff" stroke-width="1" fill="none"/></svg>
<svg style="left:181px;top:321px" width="13" height="13" viewBox="0 0 14 14"><path d="M.5 3.500l3-3 3.500 3.500 3.500-3.500 3 3-3.500 3.500 3.500 3.500-3 3-3.500-3.500-3.500 3.500-3-3 3.500-3.500z" fill="url(#gX)" stroke="#e86464" stroke-width=".7" stroke-linejoin="round"/></svg>
<svg style="left:224px;top:320px" width="15" height="17" viewBox="0 0 15 17"><rect x=".5" y=".5" width="13" height="11" fill="#f2f0e8" stroke="#3a68c8" stroke-width=".9"/><rect x="0" y="0" width="14" height="2.600" fill="#1a66e0"/><path d="M13.600 1v10.600h-13" fill="none" stroke="#28489c" stroke-width="1"/><path d="M1.200 14.800l4-4.500" stroke="#e09828" stroke-width="2.200" stroke-linecap="round"/><circle cx="7.600" cy="7.200" r="3.600" fill="#d4ecfc" stroke="#98b4d4" stroke-width="1.100"/><path d="M5.700 6.400a2.200 2.200 0 0 1 2-1.500" stroke="#fff" stroke-width="1" fill="none"/></svg>
<svg style="left:181px;top:345px" width="13" height="13" viewBox="0 0 14 14"><path d="M.5 3.500l3-3 3.500 3.500 3.500-3.500 3 3-3.500 3.500 3.500 3.500-3 3-3.500-3.500-3.500 3.500-3-3 3.500-3.500z" fill="url(#gX)" stroke="#e86464" stroke-width=".7" stroke-linejoin="round"/></svg>
<svg style="left:224px;top:344px" width="15" height="17" viewBox="0 0 15 17"><rect x=".5" y=".5" width="13" height="11" fill="#f2f0e8" stroke="#3a68c8" stroke-width=".9"/><rect x="0" y="0" width="14" height="2.600" fill="#1a66e0"/><path d="M13.600 1v10.600h-13" fill="none" stroke="#28489c" stroke-width="1"/><path d="M1.200 14.800l4-4.500" stroke="#e09828" stroke-width="2.200" stroke-linecap="round"/><circle cx="7.600" cy="7.200" r="3.600" fill="#d4ecfc" stroke="#98b4d4" stroke-width="1.100"/><path d="M5.700 6.400a2.200 2.200 0 0 1 2-1.500" stroke="#fff" stroke-width="1" fill="none"/></svg>
</body></html>
